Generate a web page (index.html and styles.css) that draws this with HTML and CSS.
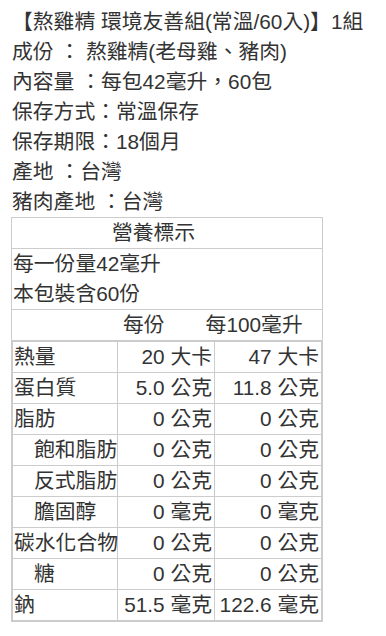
FILE: index.html
```html
<!DOCTYPE html>
<html lang="zh-Hant">
<head>
<meta charset="utf-8">
<title>熬雞精 環境友善組</title>
<link rel="stylesheet" href="styles.css">
</head>
<body>
<div class="page">
  <p class="line">【熬雞精 環境友善組(常溫/60入)】1組</p>
  <p class="line">成份 ： 熬雞精(老母雞、豬肉)</p>
  <p class="line">內容量 ：每包42毫升，60包</p>
  <p class="line">保存方式：常溫保存</p>
  <p class="line">保存期限：18個月</p>
  <p class="line">產地 ：台灣</p>
  <p class="line">豬肉產地 ：台灣</p>

  <div class="nutrition">
    <div class="n-row n-title">營養標示</div>
    <div class="n-row n-serving">
      <div>每一份量42毫升</div>
      <div>本包裝含60份</div>
    </div>
    <div class="n-row n-head">
      <span>每份</span>
      <span>每100毫升</span>
    </div>
    <table class="n-table">
      <colgroup>
        <col class="c-label">
        <col class="c-per">
        <col class="c-100">
      </colgroup>
      <tbody>
        <tr><td>熱量</td><td class="num">20 大卡</td><td class="num">47 大卡</td></tr>
        <tr><td>蛋白質</td><td class="num">5.0 公克</td><td class="num">11.8 公克</td></tr>
        <tr><td>脂肪</td><td class="num">0 公克</td><td class="num">0 公克</td></tr>
        <tr><td class="sub">飽和脂肪</td><td class="num">0 公克</td><td class="num">0 公克</td></tr>
        <tr><td class="sub">反式脂肪</td><td class="num">0 公克</td><td class="num">0 公克</td></tr>
        <tr><td class="sub">膽固醇</td><td class="num">0 毫克</td><td class="num">0 毫克</td></tr>
        <tr><td>碳水化合物</td><td class="num">0 公克</td><td class="num">0 公克</td></tr>
        <tr><td class="sub">糖</td><td class="num">0 公克</td><td class="num">0 公克</td></tr>
        <tr><td>鈉</td><td class="num">51.5 毫克</td><td class="num">122.6 毫克</td></tr>
      </tbody>
    </table>
  </div>
</div>
</body>
</html>
```
FILE: styles.css
```css
* {
  box-sizing: border-box;
}

html, body {
  margin: 0;
  padding: 0;
  background: #ffffff;
}

body {
  font-family: "Liberation Sans", "Noto Sans CJK TC", sans-serif;
  font-size: 20.8px;
  line-height: 30px;
  color: #333333;
}

.page {
  padding: 7px 0 0 11px;
}

.line {
  margin: 0;
  padding-left: 1px;
  white-space: nowrap;
}

.nutrition {
  width: 312px;
  border: 1px solid #cccccc;
}

.n-row {
  border-bottom: 1px solid #cccccc;
}

.n-title {
  text-align: center;
  padding-right: 27px;
  height: 31px;
}

.n-serving {
  padding-left: 1px;
}

.n-head {
  display: flex;
  gap: 41px;
  padding-left: 111px;
  height: 31px;
}

.n-table {
  width: 100%;
  border-collapse: collapse;
  table-layout: fixed;
  border: 1px solid #cccccc;
}

.c-label {
  width: 105px;
}

.c-per {
  width: 97px;
}

.n-table td {
  border: 1px solid #cccccc;
  padding: 0 0 0 1px;
  height: 31px;
  line-height: 30px;
  white-space: nowrap;
  vertical-align: middle;
}

.n-table td.sub {
  padding-left: 21px;
}

.n-table td.num {
  text-align: right;
  padding: 0 2px 0 0;
}
```
